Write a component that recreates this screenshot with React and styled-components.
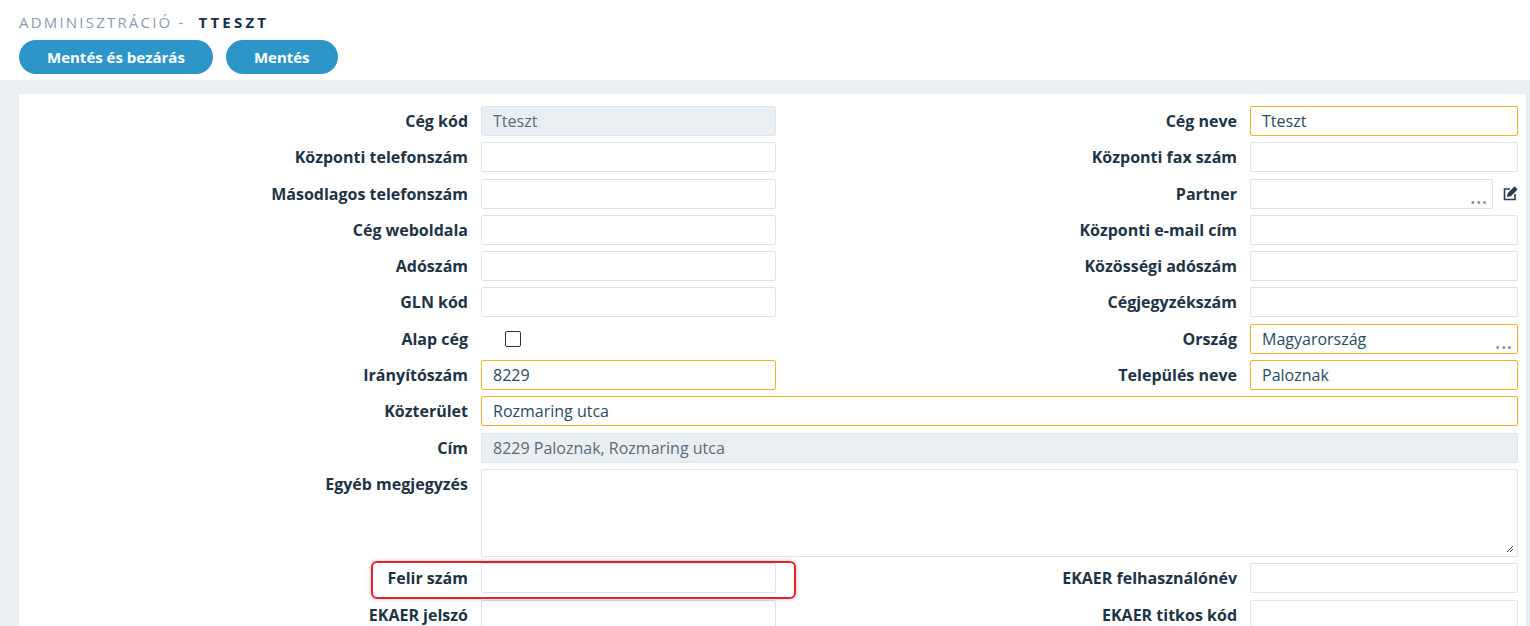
import React from "react";
import styled, { createGlobalStyle } from "styled-components";

const G = createGlobalStyle`
  html,body{margin:0;padding:0;background:#e9eef3;font-family:"Open Sans","Noto Sans",sans-serif;overflow:hidden;}
`;
const Top = styled.div`background:#fff;padding:12px 19px 6px;height:62px;`;
const Title = styled.div`font-size:15px;letter-spacing:2.2px;color:#8a9bb0;line-height:20px;
  b{color:#16324a;font-weight:700;letter-spacing:3.2px;margin-left:13px;}`;
const Btns = styled.div`display:flex;gap:13px;margin-top:8px;`;
const Btn = styled.button`height:34px;border:none;border-radius:17px;background:#2d96c9;color:#fff;
  font:700 15px "Open Sans",sans-serif;padding:0 ${p=>p.$px}px;`;
const Body = styled.div`padding:14px 4px 0 19px;`;
const Card = styled.div`background:#fff;position:relative;padding:12px 0 20px;display:grid;
  grid-template-columns:449px 295px 448px 268px;column-gap:13px;row-gap:6.3px;grid-auto-rows:minmax(30px,auto);`;
const Label = styled.div`text-align:right;font-weight:700;font-size:16px;color:#1d3447;display:flex;white-space:nowrap;
  align-items:${p=>p.$top?"flex-start":"center"};justify-content:flex-end;${p=>p.$top?"padding-top:4px;":""}`;
const Input = styled.div`box-sizing:border-box;border:1px solid ${p=>p.$req?"#f5b324":"#dde3ea"};border-radius:2px;
  background:${p=>p.$ro?"#e9eef3":"#fff"};font-size:16px;color:${p=>p.$ro?"#5c6b78":"#2a4b63"};padding:0 11px;
  display:flex;align-items:center;position:relative;${p=>p.$span?`grid-column:2 / 5;`:""}
  ${p=>p.$tall?"height:88px;":"height:30px;"}${p=>p.$narrow?"width:243px;":""}`;
const Dots = styled.span`position:absolute;right:4px;bottom:1px;color:#7f93a6;font-size:13px;letter-spacing:1px;line-height:10px;`;
const Cell = styled.div`display:flex;align-items:center;gap:9px;`;
const Check = styled.div`width:14px;height:14px;border:1px solid #333;border-radius:2px;margin-left:24px;`;
const Mark = styled.div`position:absolute;left:352px;top:467px;width:421px;height:34px;border:2px solid #e8202a;border-radius:6px;box-shadow:0 0 4px rgba(0,0,0,.25);pointer-events:none;`;
const Grip = styled.svg`position:absolute;right:3px;bottom:3px;`;

const Edit = () => (
  <svg width="16" height="16" viewBox="0 0 16 16" fill="none" stroke="#2b3d4f" strokeWidth="1.6">
    <path d="M8 3H2.5v10.5H13V8" />
    <path d="M6 10l.5-2.5 6-6 2 2-6 6z" fill="#2b3d4f" />
  </svg>
);

export default function App(){
  return (<>
    <G/>
    <Top>
      <Title>ADMINISZTRÁCIÓ -<b>TTESZT</b></Title>
      <Btns><Btn $px={28}>Mentés és bezárás</Btn><Btn $px={28}>Mentés</Btn></Btns>
    </Top>
    <Body><Card>
      <Label>Cég kód</Label><Input $ro>Tteszt</Input>
      <Label>Cég neve</Label><Input $req>Tteszt</Input>
      <Label>Központi telefonszám</Label><Input/>
      <Label>Központi fax szám</Label><Input/>
      <Label>Másodlagos telefonszám</Label><Input/>
      <Label>Partner</Label><Cell><Input $narrow><Dots>•••</Dots></Input><Edit/></Cell>
      <Label>Cég weboldala</Label><Input/>
      <Label>Központi e-mail cím</Label><Input/>
      <Label>Adószám</Label><Input/>
      <Label>Közösségi adószám</Label><Input/>
      <Label>GLN kód</Label><Input/>
      <Label>Cégjegyzékszám</Label><Input/>
      <Label>Alap cég</Label><Cell><Check/></Cell>
      <Label>Ország</Label><Input $req>Magyarország<Dots>•••</Dots></Input>
      <Label>Irányítószám</Label><Input $req>8229</Input>
      <Label>Település neve</Label><Input $req>Paloznak</Input>
      <Label>Közterület</Label><Input $req $span>Rozmaring utca</Input>
      <Label>Cím</Label><Input $ro $span>8229 Paloznak, Rozmaring utca</Input>
      <Label $top>Egyéb megjegyzés</Label><Input $span $tall>
        <Grip width="8" height="8" viewBox="0 0 8 8" stroke="#555"><path d="M7 1L1 7M7 4L4 7"/></Grip></Input>
      <Label>Felir szám</Label><Input/>
      <Label>EKAER felhasználónév</Label><Input/>
      <Label>EKAER jelszó</Label><Input/>
      <Label>EKAER titkos kód</Label><Input/>
      <Mark/>
    </Card></Body>
  </>);
}
